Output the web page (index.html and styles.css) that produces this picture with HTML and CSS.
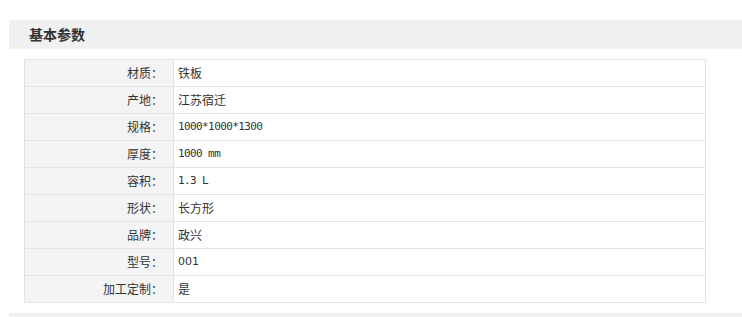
FILE: index.html
```html
<!DOCTYPE html>
<html lang="zh">
<head>
<meta charset="utf-8">
<link rel="stylesheet" href="styles.css">
</head>
<body>
<div class="page">
  <div class="section-head"><h2 class="section-title">基本参数</h2></div>
  <table class="params">
    <tr><th>材质：</th><td>铁板</td></tr>
    <tr><th>产地：</th><td>江苏宿迁</td></tr>
    <tr><th>规格：</th><td class="mono">1000*1000*1300</td></tr>
    <tr><th>厚度：</th><td class="mono">1000 mm</td></tr>
    <tr><th>容积：</th><td class="mono">1.3 L</td></tr>
    <tr><th>形状：</th><td>长方形</td></tr>
    <tr><th>品牌：</th><td>政兴</td></tr>
    <tr><th>型号：</th><td class="num">001</td></tr>
    <tr><th>加工定制：</th><td>是</td></tr>
  </table>
  <div class="section-head next"></div>
</div>
</body>
</html>
```

FILE: styles.css
```css
html, body {
  margin: 0;
  padding: 0;
  background: #fff;
}
body {
  font-family: "Noto Sans CJK SC", "Liberation Sans", sans-serif;
  font-size: 12px;
  color: #333;
}
.page {
  padding: 20px 0 0 9px;
}
.section-head {
  background: #f0f0f0;
  height: 29px;
  display: flex;
  align-items: center;
  padding-left: 20px;
}
.section-title {
  margin: -2px 0 0;
  font-size: 14px;
  font-weight: bold;
  color: #333;
}
.params {
  margin: 10px 0 0 15px;
  border-collapse: collapse;
  width: 682px;
}
.params th,
.params td {
  border: 1px solid #e3e3e3;
  height: 26px;
  padding: 0;
  line-height: 26px;
}
.params th {
  width: 138px;
  background: #f4f4f4;
  font-weight: normal;
  text-align: right;
  padding-right: 10px;
}
.params td {
  text-align: left;
  padding-left: 4px;
}
.params td.mono {
  font-family: "DejaVu Sans Mono", "Noto Sans CJK SC", monospace;
  font-size: 11px;
  letter-spacing: -0.6px;
}
.params td.num {
  font-family: "DejaVu Sans", sans-serif;
  font-size: 11px;
}
.section-head.next {
  margin-top: 10px;
  height: 10px;
}
```
